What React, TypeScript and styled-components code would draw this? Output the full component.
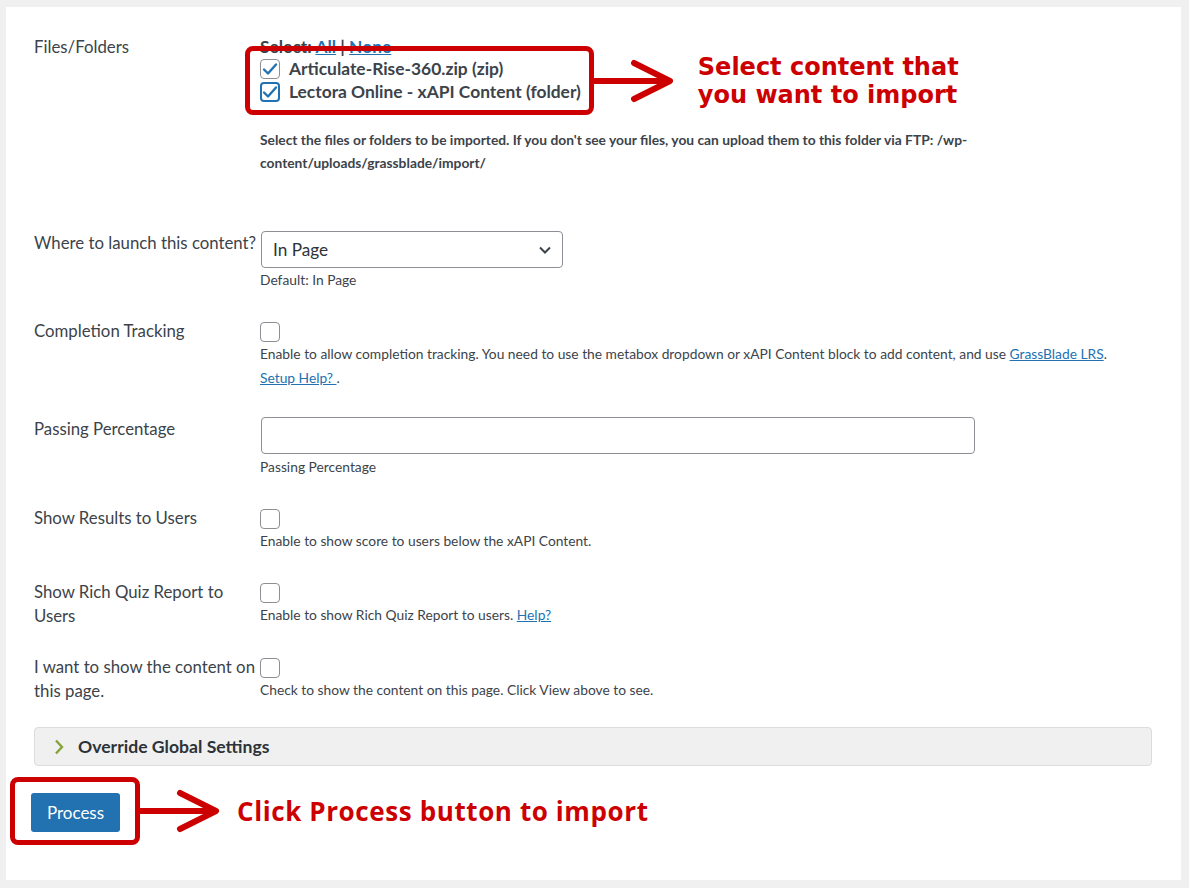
import styled, { createGlobalStyle } from "styled-components";

// Page-wide reset and the admin grey backdrop.
const GlobalStyle = createGlobalStyle`
  html, body {
    margin: 0;
    padding: 0;
    background: #f0f0f1;
  }
  body {
    font-family: Lato, "Open Sans", sans-serif;
    color: #3c434a;
  }
  * {
    box-sizing: border-box;
  }
`;

const Panel = styled.div`
  margin: 7px 8px 8px 6px;
  min-height: 873px;
  background: #fff;
  padding: 28px 29px 0 28px;
`;

const Rows = styled.div`
  display: flex;
  flex-direction: column;
  gap: 27px;
`;

const Row = styled.div<{ $extra?: number }>`
  display: grid;
  grid-template-columns: 226px 882px;
  padding-bottom: ${(p) => p.$extra ?? 0}px;
`;

const Label = styled.div`
  font-size: 16.8px;
  line-height: 24px;
  color: #3c434a;
`;

const Field = styled.div`
  display: flex;
  flex-direction: column;
  align-items: flex-start;
  font-size: 13.8px;
  line-height: 24px;
`;

const SelectLine = styled.div`
  font-size: 17.4px;
  font-weight: 700;
  line-height: 24px;
  color: #3c434a;
`;

const Link = styled.a`
  color: #2271b1;
  text-decoration: underline;
  cursor: pointer;
`;

const CalloutRow = styled.div`
  display: flex;
  align-items: center;
  margin-top: -13px;
  margin-left: -15px;
`;

const RedFrame = styled.div<{ $pad: string }>`
  position: relative;
  z-index: 1;
  border: 5px solid #cc0000;
  border-radius: 8px;
  padding: ${(p) => p.$pad};
`;

const FileItem = styled.label`
  display: flex;
  align-items: center;
  gap: 9px;
  height: 23px;
  font-size: 17.4px;
  font-weight: 700;
  color: #3c434a;
`;

const Box = styled.span<{ $focus?: boolean }>`
  display: inline-flex;
  align-items: center;
  justify-content: center;
  width: 20px;
  height: 20px;
  flex: none;
  border: ${(p) => (p.$focus ? "2px solid #2271b1" : "1px solid #8c8f94")};
  border-radius: 4px;
  background: #fff;
`;

const Callout = styled.div<{ $size: number; $family: string; $gap: number; $track?: number }>`
  margin-left: ${(p) => p.$gap}px;
  color: #cc0000;
  font-family: ${(p) => p.$family};
  font-weight: 700;
  font-size: ${(p) => p.$size}px;
  letter-spacing: ${(p) => p.$track ?? 0}px;
  line-height: 28px;
`;

const Hint = styled.div<{ $bold?: boolean; $top?: number }>`
  font-size: 13.8px;
  line-height: ${(p) => (p.$bold ? 23 : 24)}px;
  font-weight: ${(p) => (p.$bold ? 700 : 400)};
  margin-top: ${(p) => p.$top ?? 0}px;
  color: #3c434a;
`;

const SelectBox = styled.div`
  width: 302px;
  height: 37px;
  margin-left: 1px;
  border: 1px solid #8c8f94;
  border-radius: 4px;
  display: flex;
  align-items: center;
  justify-content: space-between;
  padding: 0 10px 0 11px;
  font-size: 17.2px;
  color: #2c3338;
`;

const TextInput = styled.input`
  width: 714px;
  height: 37px;
  margin-left: 1px;
  border: 1px solid #8c8f94;
  border-radius: 4px;
  background: #fff;
  font: inherit;
`;

const CheckWrap = styled.div`
  padding-top: 3px;
  display: flex;
  flex-direction: column;
  align-items: flex-start;
`;

const Accordion = styled.div`
  margin-top: 24px;
  height: 39px;
  border: 1px solid #dcdcde;
  border-radius: 4px;
  background: #f0f0f0;
  display: flex;
  align-items: center;
  gap: 14px;
  padding-left: 19px;
  font-size: 17.6px;
  font-weight: 700;
  color: #2c3338;
`;

const Footer = styled.div`
  display: flex;
  align-items: center;
  margin-top: 11px;
  margin-left: -24px;
`;

const ProcessButton = styled.button`
  width: 89px;
  height: 39px;
  border: none;
  border-radius: 3px;
  background: #2271b1;
  color: #fff;
  font-family: inherit;
  font-size: 17px;
  cursor: pointer;
`;

const Check = () => (
  <svg width="16" height="14" viewBox="0 0 16 14">
    <path
      d="M2 7.5 L6 11.5 L14 2.5"
      fill="none"
      stroke="#2271b1"
      strokeWidth="2.4"
      strokeLinecap="round"
      strokeLinejoin="round"
    />
  </svg>
);

const Arrow = ({ width }: { width: number }) => (
  <svg width={width} height="44" viewBox={`0 0 ${width} 44`}>
    <g fill="none" stroke="#cc0000" strokeWidth="6" strokeLinecap="round" strokeLinejoin="round">
      <path d={`M0 22 H${width - 6}`} />
      <path d={`M${width - 40} 4 L${width - 4} 22 L${width - 40} 40`} />
    </g>
  </svg>
);

const ChevronDown = () => (
  <svg width="14" height="10" viewBox="0 0 14 10">
    <path d="M2 2.5 L7 7.5 L12 2.5" fill="none" stroke="#3c434a" strokeWidth="2" />
  </svg>
);

const ChevronRight = () => (
  <svg width="10" height="16" viewBox="0 0 10 16">
    <path d="M2 1.5 L8 8 L2 14.5" fill="none" stroke="#86a23a" strokeWidth="2.4" />
  </svg>
);

function App() {
  return (
    <>
      <GlobalStyle />
      <Panel>
        <Rows>
          <Row $extra={30}>
            <Label>Files/Folders</Label>
            <Field>
              <SelectLine>
                Select: <Link>All</Link> | <Link>None</Link>
              </SelectLine>
              <CalloutRow>
                <RedFrame $pad="6px 8px 7px 10px">
                  <FileItem>
                    <Box>
                      <Check />
                    </Box>
                    Articulate-Rise-360.zip (zip)
                  </FileItem>
                  <FileItem>
                    <Box $focus>
                      <Check />
                    </Box>
                    Lectora Online - xAPI Content (folder)
                  </FileItem>
                </RedFrame>
                <Arrow width={80} />
                <Callout $size={24} $family={'"DejaVu Sans", sans-serif'} $gap={24}>
                  Select content that
                  <br />
                  you want to import
                </Callout>
              </CalloutRow>
              <Hint $bold $top={13}>
                Select the files or folders to be imported. If you don't see your files, you can upload them to this
                folder via FTP: /wp-content/uploads/grassblade/import/
              </Hint>
            </Field>
          </Row>

          <Row>
            <Label>Where to launch this content?</Label>
            <Field>
              <SelectBox>
                In Page
                <ChevronDown />
              </SelectBox>
              <Hint>Default: In Page</Hint>
            </Field>
          </Row>

          <Row>
            <Label>Completion Tracking</Label>
            <CheckWrap>
              <Box />
              <Hint>
                Enable to allow completion tracking. You need to use the metabox dropdown or xAPI Content block to add
                content, and use <Link>GrassBlade LRS</Link>. <Link>Setup Help? </Link>.
              </Hint>
            </CheckWrap>
          </Row>

          <Row>
            <Label>Passing Percentage</Label>
            <Field>
              <TextInput />
              <Hint $top={1}>Passing Percentage</Hint>
            </Field>
          </Row>

          <Row>
            <Label>Show Results to Users</Label>
            <CheckWrap>
              <Box />
              <Hint>Enable to show score to users below the xAPI Content.</Hint>
            </CheckWrap>
          </Row>

          <Row>
            <Label>Show Rich Quiz Report to Users</Label>
            <CheckWrap>
              <Box />
              <Hint>
                Enable to show Rich Quiz Report to users. <Link>Help?</Link>
              </Hint>
            </CheckWrap>
          </Row>

          <Row>
            <Label>I want to show the content on this page.</Label>
            <CheckWrap>
              <Box />
              <Hint>Check to show the content on this page. Click View above to see.</Hint>
            </CheckWrap>
          </Row>
        </Rows>

        <Accordion>
          <ChevronRight />
          Override Global Settings
        </Accordion>

        <Footer>
          <RedFrame $pad="11px 15px 8px 16px">
            <ProcessButton>Process</ProcessButton>
          </RedFrame>
          <Arrow width={80} />
          <Callout $size={26} $family={'"Open Sans", sans-serif'} $gap={17} $track={0.6}>
            Click Process button to import
          </Callout>
        </Footer>
      </Panel>
    </>
  );
}

export default App;
